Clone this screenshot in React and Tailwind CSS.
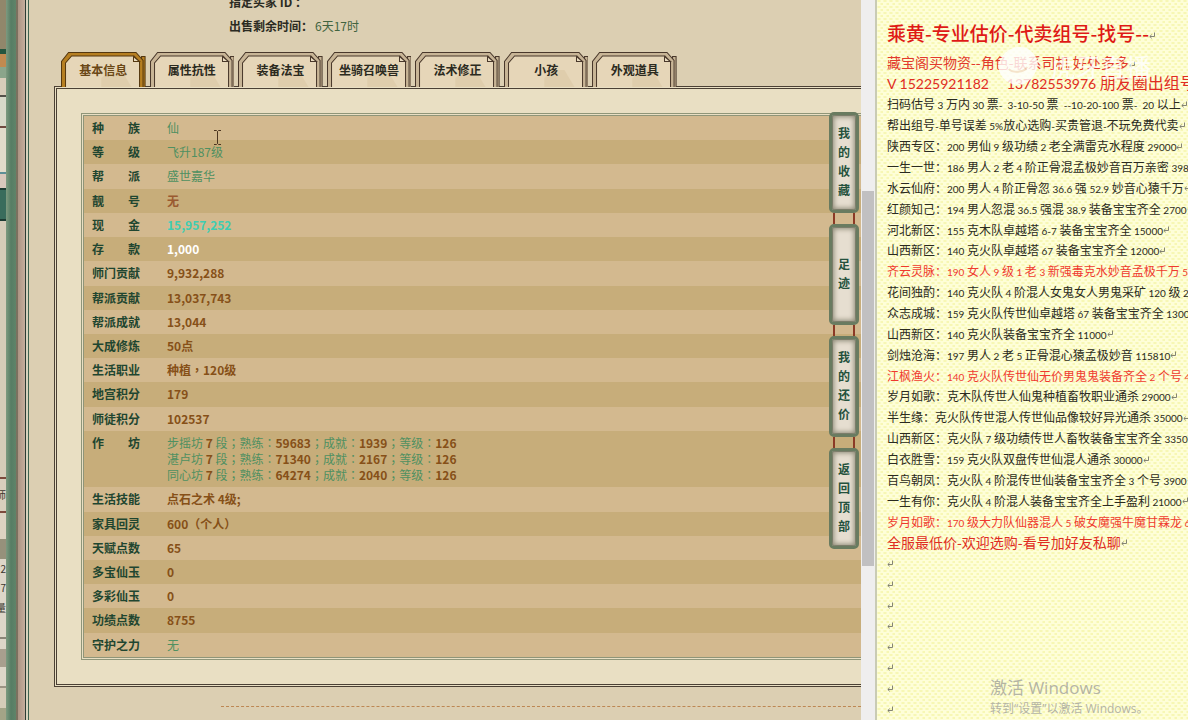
import React from "react";

const tabs = ["基本信息", "属性抗性", "装备法宝", "坐骑召唤兽", "法术修正", "小孩", "外观道具"];

const brown = "font-bold text-[#865018]";
const green = "text-[#4f9061]";

const rows = [
  ["种族", "仙", green],
  ["等级", "飞升187级", green],
  ["帮派", "盛世嘉华", green],
  ["靓号", "无", "font-bold text-[#9a5a30]"],
  ["现金", "15,957,252", "font-bold text-[#3fcdb2]"],
  ["存款", "1,000", "font-bold text-white"],
  ["师门贡献", "9,932,288", brown],
  ["帮派贡献", "13,037,743", brown],
  ["帮派成就", "13,044", brown],
  ["大成修炼", "50点", brown],
  ["生活职业", "种植，120级", brown],
  ["地宫积分", "179", brown],
  ["师徒积分", "102537", brown],
  ["作坊", null, ""],
  ["生活技能", "点石之术 4级;", brown],
  ["家具回灵", "600（个人）", brown],
  ["天赋点数", "65", brown],
  ["多宝仙玉", "0", brown],
  ["多彩仙玉", "0", brown],
  ["功绩点数", "8755", brown],
  ["守护之力", "无", green],
];

const workshops = [
  ["步摇坊", "7", "59683", "1939", "126"],
  ["湛卢坊", "7", "71340", "2167", "126"],
  ["同心坊", "7", "64274", "2040", "126"],
];

const sideLinks = ["我的收藏", "足迹", "我的还价", "返回顶部"];

const listings = [
  ["扫码估号 3 万内 30 票-  3-10-50 票  --10-20-100 票-  20 以上", false],
  ["帮出组号-单号误差 5%放心选购-买贵管退-不玩免费代卖", false],
  ["陕西专区：200 男仙 9 级功绩 2 老全满雷克水程度 29000", false],
  ["一生一世：186 男人 2 老 4 阶正骨混孟极妙音百万亲密 398", false],
  ["水云仙府：200 男人 4 阶正骨忽 36.6 强 52.9 妙音心猿千万", false],
  ["红颜知己：194 男人忽混 36.5 强混 38.9 装备宝宝齐全 2700", false],
  ["河北新区：155 克木队卓越塔 6-7 装备宝宝齐全 15000", false],
  ["山西新区：140 克火队卓越塔 67 装备宝宝齐全 12000", false],
  ["齐云灵脉：190 女人 9 级 1 老 3 新强毒克水妙音孟极千万 5", true],
  ["花间独酌：140 克火队 4 阶混人女鬼女人男鬼采矿 120 级 2", false],
  ["众志成城：159 克火队传世仙卓越塔 67 装备宝宝齐全 1300", false],
  ["山西新区：140 克火队装备宝宝齐全 11000", false],
  ["剑烛沧海：197 男人 2 老 5 正骨混心猿孟极妙音 115810", false],
  ["江枫渔火：140 克火队传世仙无价男鬼鬼装备齐全 2 个号 4", true],
  ["岁月如歌：克木队传世人仙鬼种植畜牧职业通杀 29000", false],
  ["半生缘：克火队传世混人传世仙品像较好异光通杀 35000", false],
  ["山西新区：克火队 7 级功绩传世人畜牧装备宝宝齐全 3350", false],
  ["白衣胜雪：159 克火队双盘传世仙混人通杀 30000", false],
  ["百鸟朝凤：克火队 4 阶混传世仙装备宝宝齐全 3 个号 3900", false],
  ["一生有你：克火队 4 阶混人装备宝宝齐全上手盈利 21000", false],
  ["岁月如歌：170 级大力队仙器混人 5 破女魔强牛魔甘霖龙 6", true],
];

const stripBlocks = [
  ["h-[49px] bg-[#91876b]", ""],
  ["h-[5px] bg-[#24563f]", ""],
  ["h-[13px] bg-[#c18a50]", ""],
  ["h-[11px] bg-[#8ba58b]", ""],
  ["h-[19px] bg-[#d8cdba] border-b-2 border-[#55514a]", ""],
  ["h-[31px] bg-[#d8d9c9] border-b-2 border-[#6f4a40]", ""],
  ["h-[46px] bg-[#e2dccb] border-b-2 border-[#5d8f96]", ""],
  ["h-[14px] bg-[#d9c8bc]", ""],
  ["h-[33px] bg-[#396c5c] border-y-2 border-[#1d3b32]", ""],
  ["h-[258px] bg-[#d5ccb8] border-b-2 border-[#7c4a3c]", ""],
  ["h-[34px] bg-[#d9cfbd] border-b-2 border-[#7c4a3c]", "师"],
  ["h-[26px] bg-[#ddd3c2]", ""],
  ["h-[20px] bg-[#96917b]", ""],
  ["h-[20px] bg-[#ddd6c8]", "2"],
  ["h-[18px] bg-[#ddd6c8]", "7"],
  ["h-[22px] bg-[#ddd6c8]", "量"],
  ["h-[20px] bg-[#ddd6c8] border-b-2 border-[#8b8578]", ""],
  ["h-[10px] bg-[#ddd6c8]", ""],
  ["h-[18px] bg-[#a89f8e]", ""],
  ["h-[21px] bg-[#ddd6c8] border-b-2 border-[#9c9485]", ""],
  ["h-[20px] bg-[#d5ccb8]", ""],
  ["grow bg-[#a3a487]", ""],
];

function Tab({ label, active }) {
  const band = active ? "#b67f22" : "#c8b596";
  const line = active ? "#54370f" : "#49382b";
  return (
    <button
      type="button"
      role="tab"
      aria-selected={active}
      className={`relative isolate h-[35px] flex-1 text-[12px] font-bold ${active ? "text-[#6a4716]" : "text-[#2b2a20]"}`}
    >
      <svg
        className="absolute inset-0 -z-10 h-full w-full"
        viewBox="0 0 84 35"
        preserveAspectRatio="none"
        aria-hidden="true"
      >
        <path d="M80 35V4.5H83.500V35" fill={band} stroke={line} />
        <path d="M.5 35V9.500L7.500 .5H74.500L81.500 8.500V35" fill={band} stroke={line} />
        <path d="M4.500 35V11L10.500 4H72.500L78 10V35" fill="#e6d6b8" stroke={line} />
        <path d="M40 35V26L50 18H60L70 35Z" fill="#d8c39d" opacity=".45" />
        <path d="M72 4.500V9.500H78Z" fill="#e9dcc0" stroke={line} />
      </svg>
      {label}
    </button>
  );
}

function Mixed({ text, latin }) {
  return text.split(/([\x20-\x7e“”]+)/).map((part, i) =>
    /^[\x20-\x7e“”]+$/.test(part) ? (
      <span key={i} className={latin}>{part}</span>
    ) : (
      part
    )
  );
}

function Mark() {
  return (
    <svg className="inline-block h-[7px] w-[6px] shrink-0" viewBox="0 0 6 7" aria-hidden="true">
      <path d="M5.500 .5V4.500H1M2.700 2.700L.8 4.500L2.700 6.300" fill="none" stroke="#77776a" strokeWidth=".9" />
    </svg>
  );
}

function Label({ text }) {
  return (
    <span className="flex w-[48px] justify-between">
      {text.length === 2 ? (
        <>
          <span>{text[0]}</span>
          <span>{text[1]}</span>
        </>
      ) : (
        text
      )}
    </span>
  );
}

function GamePage() {
  return (
    <main className="relative min-w-0 flex-1 overflow-hidden bg-[#dccfb2]">
      <dl className="pl-[200px] text-[12px] leading-[24px] text-[#2b2b22]">
        <div className="-mt-[10px] flex">
          <dt className="font-bold">指定买家 ID ：</dt>
          <dd />
        </div>
        <div className="flex">
          <dt className="font-bold">出售剩余时间：</dt>
          <dd className="pl-[2px] text-[#42643f]">6天17时</dd>
        </div>
      </dl>

      <div role="tablist" className="ml-[32px] mt-[14px] flex w-[616px] gap-1">
        {tabs.map((t, i) => (
          <Tab key={t} label={t} active={i === 0} />
        ))}
      </div>

      <section className="-mt-[1px] ml-[25px] border-[3px] border-r-0 border-double border-[#4b4034] bg-[#e9dfc3] py-[24px] pl-[24px]">
        <div className="border-[3px] border-r-0 border-double border-[#8f9578]">
          <table className="h-[541px] w-full border-collapse text-[12px] leading-[16px]">
            <tbody>
              {rows.map(([label, value, tone]) => (
                <tr key={label} className="odd:bg-[#d3b98f] even:bg-[#c7ad7a]">
                  <th scope="row" className="w-[83px] py-1 pl-2 text-left align-top font-bold text-[#1f4630]">
                    <Label text={label} />
                  </th>
                  <td className={`py-1 align-top font-['Noto_Sans_CJK_TC','Noto_Sans_CJK_SC',sans-serif] ${tone}`}>
                    {value ??
                      workshops.map(([name, stage, skill, feat, level]) => (
                        <div key={name} className={green}>
                          {name} <b className="text-[#865018]">{stage}</b> 段；熟练：
                          <b className="text-[#865018]">{skill}</b>；成就：
                          <b className="text-[#865018]">{feat}</b>；等级：
                          <b className="text-[#865018]">{level}</b>
                        </div>
                      ))}
                  </td>
                </tr>
              ))}
            </tbody>
          </table>
        </div>
      </section>

      <hr className="ml-[192px] mt-[19px] border-0 border-t border-dashed border-[#bd8753]" />

      <nav className="absolute right-[2px] top-[112px] flex flex-col">
        {sideLinks.map((text, i) => (
          <React.Fragment key={text}>
            {i > 0 && <span className="mx-[4px] h-[11px] border-x-2 border-[#8c3a26]" />}
            <a
              href="#"
              className="flex h-[101px] w-[30px] flex-col items-center justify-center rounded-[5px] border-[3px] border-[#697b60] bg-[#e6ded0] pb-1 text-[12px] font-bold leading-[19px] text-[#24513c] shadow-[inset_0_0_5px_2px_#8f8b78,inset_0_0_0_1px_#4c5c4a]"
            >
              {text.split("").map((c, k) => (
                <span key={k}>{c}</span>
              ))}
            </a>
          </React.Fragment>
        ))}
      </nav>

      <svg className="absolute left-[184px] top-[130px] h-[15px] w-[9px]" viewBox="0 0 9 15" aria-hidden="true">
        <path d="M1 .5H3.500L4.500 1.500L5.500 .5H8M4.500 1.500V13.500M1 14.500H3.500L4.500 13.500L5.500 14.500H8" fill="none" stroke="#4b3520" />
      </svg>
    </main>
  );
}

function NotesDocument() {
  return (
    <aside className="relative flex w-[313px] shrink-0 flex-col overflow-hidden whitespace-pre border-l-2 border-[#c9cbb4] bg-[#fefed8] bg-[radial-gradient(ellipse_2px_1px_at_2px_1px,#f7f7b4_80%,transparent),radial-gradient(ellipse_2px_1px_at_5px_4px,#f7f7b4_80%,transparent)] bg-[length:6px_6px] pl-[10px] pt-[19px] text-[12px] text-[#2a2a20]">
      <h1 className="h-[33px] text-[19px] font-medium leading-[28px] text-[#df1a16]">
        乘黄-专业估价-代卖组号-找号--
        <Mark />
      </h1>
      <p className="h-[21px] text-[14px] leading-[21px] text-[#e23a2c]">
        藏宝阁买物资--角色-联系司机 好处多多
        <Mark />
      </p>
      <p className="h-[21px] text-[16px] leading-[19px] text-[#e02c22]">
        <Mixed text="V 15225921182     13782553976 朋友圈出组号" latin="font-[Lato] text-[14px]" />
      </p>
      <div className="flex min-h-0 flex-1 flex-col">
        {listings.map(([text, hot], i) => (
          <p key={i} className={`flex flex-1 items-center ${hot ? "text-[#ef3a2e]" : ""}`}>
            <span>
              <Mixed text={text} latin="font-[Lato] text-[10px]" />
            </span>
            <Mark />
          </p>
        ))}
        <p className="flex flex-1 items-center text-[14px] leading-[20px] text-[#e02c22]">
          全服最低价-欢迎选购-看号加好友私聊
          <Mark />
        </p>
        {Array.from({ length: 8 }, (_, i) => (
          <p key={i} className="flex flex-1 items-center">
            <Mark />
          </p>
        ))}
      </div>

      <div className="absolute left-[120px] top-[45px] flex items-center gap-3 opacity-80">
        <svg className="h-[42px] w-[42px]" viewBox="0 0 42 42" aria-hidden="true">
          <path d="M21 2C32 1 40 9 41 20C38 32 31 40 20 40C9 39 2 31 1 20C5 9 11 3 21 2Z" fill="#fff" />
          <path d="M12 24C15 28 27 28 30 22" fill="none" stroke="#f3ddc8" strokeWidth="2" />
        </svg>
        <span className="text-[25px] leading-[40px] text-white">虎牙直播</span>
      </div>

      <div className="absolute bottom-[2px] left-[113px] text-[#b4b4a4]">
        <div className="text-[17px] leading-[22px]">
          <Mixed text="激活 Windows" latin="font-['Open_Sans']" />
        </div>
        <div className="text-[12px] leading-[18px]">
          <Mixed text="转到“设置”以激活 Windows。" latin="font-['Open_Sans']" />
        </div>
      </div>
    </aside>
  );
}

export default function App() {
  return (
    <div className="flex h-screen overflow-hidden bg-[#dccfb2] font-['Noto_Sans_CJK_SC',sans-serif]">
      <div className="flex w-[6px] shrink-0 flex-col overflow-hidden text-[10px] leading-[18px] text-[#3b372f]">
        {stripBlocks.map(([style, text], i) => (
          <div key={i} className={`flex w-[6px] shrink-0 items-center justify-end overflow-hidden ${style}`}>
            {text}
          </div>
        ))}
      </div>
      <div className="w-[10px] shrink-0 bg-linear-to-r from-[#7d9a80] via-[#567d64] to-[#5f8469]" />
      <div className="w-[9px] shrink-0 border-l-2 border-[#7a715f] bg-linear-to-r from-[#ab9483] to-[#c5ae9d]" />
      <div className="w-[4px] shrink-0 border-x border-l-[#2c3c34] border-r-[#3f6350] bg-[#d7d3bd]" />
      <GamePage />
      <div className="flex w-[14px] shrink-0 flex-col bg-[#efeeee] pt-[191px]">
        <div className="mx-[1px] h-[375px] bg-[#c1c0c1]" />
      </div>
      <NotesDocument />
    </div>
  );
}
